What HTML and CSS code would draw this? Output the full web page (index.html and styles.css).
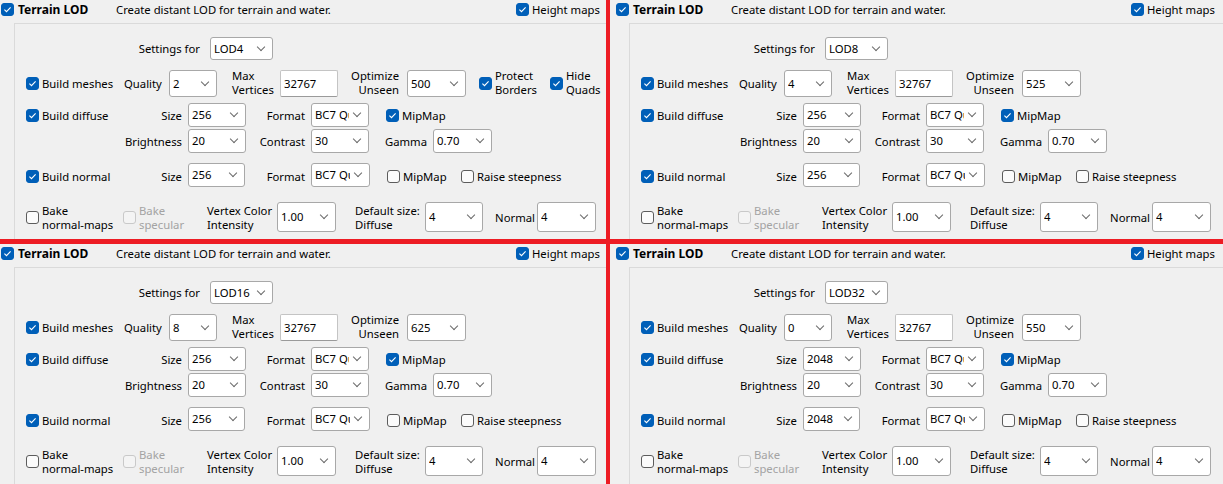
FILE: index.html
```html
<!DOCTYPE html>
<html>
<head>
<meta charset="utf-8">
<link rel="stylesheet" href="styles.css">
</head>
<body>
<main class="board">

<!-- top left -->
<section class="panel">
  <header class="head">
    <label class="chk on"><span class="box"><svg viewBox="0 0 11 11"><path d="M2.4 5.6 L4.5 7.7 L8.6 3.3"/></svg></span><b class="title">Terrain LOD</b></label>
    <span class="desc">Create distant LOD for terrain and water.</span>
    <label class="chk on"><span class="box"><svg viewBox="0 0 11 11"><path d="M2.4 5.6 L4.5 7.7 L8.6 3.3"/></svg></span>Height maps</label>
  </header>
  <div class="group">
    <div class="row r-set"><span class="lbl end pr10">Settings for</span><span class="combo"><span class="val">LOD4</span><i class="chev"></i></span></div>
    <div class="row r-mesh">
      <label class="chk on pl11"><span class="box"><svg viewBox="0 0 11 11"><path d="M2.4 5.6 L4.5 7.7 L8.6 3.3"/></svg></span>Build meshes</label>
      <span class="lbl">Quality</span>
      <span class="combo"><span class="val">2</span><i class="chev"></i></span>
      <span class="lbl two pl15">Max<br>Vertices</span>
      <span class="edit">32767</span>
      <span class="lbl two end pr8">Optimize<br>Unseen</span>
      <span class="combo"><span class="val">500</span><i class="chev"></i></span>
      <label class="chk on pl13"><span class="box"><svg viewBox="0 0 11 11"><path d="M2.4 5.6 L4.5 7.7 L8.6 3.3"/></svg></span><span class="two">Protect<br>Borders</span></label>
      <label class="chk on"><span class="box"><svg viewBox="0 0 11 11"><path d="M2.4 5.6 L4.5 7.7 L8.6 3.3"/></svg></span><span class="two">Hide<br>Quads</span></label>
    </div>
    <div class="row r-diff">
      <label class="chk on pl11"><span class="box"><svg viewBox="0 0 11 11"><path d="M2.4 5.6 L4.5 7.7 L8.6 3.3"/></svg></span>Build diffuse</label>
      <span class="lbl end pr6">Size</span>
      <span class="combo"><span class="val">256</span><i class="chev"></i></span>
      <span class="lbl end pr6">Format</span>
      <span class="combo"><span class="val">BC7 Quality</span><i class="chev"></i></span>
      <label class="chk on pl17"><span class="box"><svg viewBox="0 0 11 11"><path d="M2.4 5.6 L4.5 7.7 L8.6 3.3"/></svg></span>MipMap</label>
    </div>
    <div class="row r-bri">
      <span></span>
      <span class="lbl end pr6">Brightness</span>
      <span class="combo"><span class="val">20</span><i class="chev"></i></span>
      <span class="lbl end pr6">Contrast</span>
      <span class="combo"><span class="val">30</span><i class="chev"></i></span>
      <span class="lbl end pr6">Gamma</span>
      <span class="combo"><span class="val">0.70</span><i class="chev"></i></span>
    </div>
    <div class="row r-norm">
      <label class="chk on pl11"><span class="box"><svg viewBox="0 0 11 11"><path d="M2.4 5.6 L4.5 7.7 L8.6 3.3"/></svg></span>Build normal</label>
      <span class="lbl end pr6">Size</span>
      <span class="combo"><span class="val">256</span><i class="chev"></i></span>
      <span class="lbl end pr6">Format</span>
      <span class="combo"><span class="val">BC7 Quality</span><i class="chev"></i></span>
      <label class="chk pl17"><span class="box"></span>MipMap</label>
      <label class="chk"><span class="box"></span>Raise steepness</label>
    </div>
    <div class="row r-bake">
      <label class="chk pl11"><span class="box"></span><span class="two">Bake<br>normal-maps</span></label>
      <label class="chk off"><span class="box"></span><span class="two">Bake<br>specular</span></label>
      <span class="lbl two">Vertex Color<br>Intensity</span>
      <span class="combo"><span class="val">1.00</span><i class="chev"></i></span>
      <span class="lbl two pl19">Default size:<br>Diffuse</span>
      <span class="combo"><span class="val">4</span><i class="chev"></i></span>
      <span class="lbl end pr2">Normal</span>
      <span class="combo"><span class="val">4</span><i class="chev"></i></span>
    </div>
  </div>
</section>

<!-- top right -->
<section class="panel east">
  <header class="head">
    <label class="chk on"><span class="box"><svg viewBox="0 0 11 11"><path d="M2.4 5.6 L4.5 7.7 L8.6 3.3"/></svg></span><b class="title">Terrain LOD</b></label>
    <span class="desc">Create distant LOD for terrain and water.</span>
    <label class="chk on"><span class="box"><svg viewBox="0 0 11 11"><path d="M2.4 5.6 L4.5 7.7 L8.6 3.3"/></svg></span>Height maps</label>
  </header>
  <div class="group">
    <div class="row r-set"><span class="lbl end pr10">Settings for</span><span class="combo"><span class="val">LOD8</span><i class="chev"></i></span></div>
    <div class="row r-mesh">
      <label class="chk on pl11"><span class="box"><svg viewBox="0 0 11 11"><path d="M2.4 5.6 L4.5 7.7 L8.6 3.3"/></svg></span>Build meshes</label>
      <span class="lbl">Quality</span>
      <span class="combo"><span class="val">4</span><i class="chev"></i></span>
      <span class="lbl two pl15">Max<br>Vertices</span>
      <span class="edit">32767</span>
      <span class="lbl two end pr8">Optimize<br>Unseen</span>
      <span class="combo"><span class="val">525</span><i class="chev"></i></span>
    </div>
    <div class="row r-diff">
      <label class="chk on pl11"><span class="box"><svg viewBox="0 0 11 11"><path d="M2.4 5.6 L4.5 7.7 L8.6 3.3"/></svg></span>Build diffuse</label>
      <span class="lbl end pr6">Size</span>
      <span class="combo"><span class="val">256</span><i class="chev"></i></span>
      <span class="lbl end pr6">Format</span>
      <span class="combo"><span class="val">BC7 Quality</span><i class="chev"></i></span>
      <label class="chk on pl17"><span class="box"><svg viewBox="0 0 11 11"><path d="M2.4 5.6 L4.5 7.7 L8.6 3.3"/></svg></span>MipMap</label>
    </div>
    <div class="row r-bri">
      <span></span>
      <span class="lbl end pr6">Brightness</span>
      <span class="combo"><span class="val">20</span><i class="chev"></i></span>
      <span class="lbl end pr6">Contrast</span>
      <span class="combo"><span class="val">30</span><i class="chev"></i></span>
      <span class="lbl end pr6">Gamma</span>
      <span class="combo"><span class="val">0.70</span><i class="chev"></i></span>
    </div>
    <div class="row r-norm">
      <label class="chk on pl11"><span class="box"><svg viewBox="0 0 11 11"><path d="M2.4 5.6 L4.5 7.7 L8.6 3.3"/></svg></span>Build normal</label>
      <span class="lbl end pr6">Size</span>
      <span class="combo"><span class="val">256</span><i class="chev"></i></span>
      <span class="lbl end pr6">Format</span>
      <span class="combo"><span class="val">BC7 Quality</span><i class="chev"></i></span>
      <label class="chk pl17"><span class="box"></span>MipMap</label>
      <label class="chk"><span class="box"></span>Raise steepness</label>
    </div>
    <div class="row r-bake">
      <label class="chk pl11"><span class="box"></span><span class="two">Bake<br>normal-maps</span></label>
      <label class="chk off"><span class="box"></span><span class="two">Bake<br>specular</span></label>
      <span class="lbl two">Vertex Color<br>Intensity</span>
      <span class="combo"><span class="val">1.00</span><i class="chev"></i></span>
      <span class="lbl two pl19">Default size:<br>Diffuse</span>
      <span class="combo"><span class="val">4</span><i class="chev"></i></span>
      <span class="lbl end pr2">Normal</span>
      <span class="combo"><span class="val">4</span><i class="chev"></i></span>
    </div>
  </div>
</section>

<!-- bottom left -->
<section class="panel">
  <header class="head">
    <label class="chk on"><span class="box"><svg viewBox="0 0 11 11"><path d="M2.4 5.6 L4.5 7.7 L8.6 3.3"/></svg></span><b class="title">Terrain LOD</b></label>
    <span class="desc">Create distant LOD for terrain and water.</span>
    <label class="chk on"><span class="box"><svg viewBox="0 0 11 11"><path d="M2.4 5.6 L4.5 7.7 L8.6 3.3"/></svg></span>Height maps</label>
  </header>
  <div class="group">
    <div class="row r-set"><span class="lbl end pr10">Settings for</span><span class="combo"><span class="val">LOD16</span><i class="chev"></i></span></div>
    <div class="row r-mesh">
      <label class="chk on pl11"><span class="box"><svg viewBox="0 0 11 11"><path d="M2.4 5.6 L4.5 7.7 L8.6 3.3"/></svg></span>Build meshes</label>
      <span class="lbl">Quality</span>
      <span class="combo"><span class="val">8</span><i class="chev"></i></span>
      <span class="lbl two pl15">Max<br>Vertices</span>
      <span class="edit">32767</span>
      <span class="lbl two end pr8">Optimize<br>Unseen</span>
      <span class="combo"><span class="val">625</span><i class="chev"></i></span>
    </div>
    <div class="row r-diff">
      <label class="chk on pl11"><span class="box"><svg viewBox="0 0 11 11"><path d="M2.4 5.6 L4.5 7.7 L8.6 3.3"/></svg></span>Build diffuse</label>
      <span class="lbl end pr6">Size</span>
      <span class="combo"><span class="val">256</span><i class="chev"></i></span>
      <span class="lbl end pr6">Format</span>
      <span class="combo"><span class="val">BC7 Quality</span><i class="chev"></i></span>
      <label class="chk on pl17"><span class="box"><svg viewBox="0 0 11 11"><path d="M2.4 5.6 L4.5 7.7 L8.6 3.3"/></svg></span>MipMap</label>
    </div>
    <div class="row r-bri">
      <span></span>
      <span class="lbl end pr6">Brightness</span>
      <span class="combo"><span class="val">20</span><i class="chev"></i></span>
      <span class="lbl end pr6">Contrast</span>
      <span class="combo"><span class="val">30</span><i class="chev"></i></span>
      <span class="lbl end pr6">Gamma</span>
      <span class="combo"><span class="val">0.70</span><i class="chev"></i></span>
    </div>
    <div class="row r-norm">
      <label class="chk on pl11"><span class="box"><svg viewBox="0 0 11 11"><path d="M2.4 5.6 L4.5 7.7 L8.6 3.3"/></svg></span>Build normal</label>
      <span class="lbl end pr6">Size</span>
      <span class="combo"><span class="val">256</span><i class="chev"></i></span>
      <span class="lbl end pr6">Format</span>
      <span class="combo"><span class="val">BC7 Quality</span><i class="chev"></i></span>
      <label class="chk pl17"><span class="box"></span>MipMap</label>
      <label class="chk"><span class="box"></span>Raise steepness</label>
    </div>
    <div class="row r-bake">
      <label class="chk pl11"><span class="box"></span><span class="two">Bake<br>normal-maps</span></label>
      <label class="chk off"><span class="box"></span><span class="two">Bake<br>specular</span></label>
      <span class="lbl two">Vertex Color<br>Intensity</span>
      <span class="combo"><span class="val">1.00</span><i class="chev"></i></span>
      <span class="lbl two pl19">Default size:<br>Diffuse</span>
      <span class="combo"><span class="val">4</span><i class="chev"></i></span>
      <span class="lbl end pr2">Normal</span>
      <span class="combo"><span class="val">4</span><i class="chev"></i></span>
    </div>
  </div>
</section>

<!-- bottom right -->
<section class="panel east">
  <header class="head">
    <label class="chk on"><span class="box"><svg viewBox="0 0 11 11"><path d="M2.4 5.6 L4.5 7.7 L8.6 3.3"/></svg></span><b class="title">Terrain LOD</b></label>
    <span class="desc">Create distant LOD for terrain and water.</span>
    <label class="chk on"><span class="box"><svg viewBox="0 0 11 11"><path d="M2.4 5.6 L4.5 7.7 L8.6 3.3"/></svg></span>Height maps</label>
  </header>
  <div class="group">
    <div class="row r-set"><span class="lbl end pr10">Settings for</span><span class="combo"><span class="val">LOD32</span><i class="chev"></i></span></div>
    <div class="row r-mesh">
      <label class="chk on pl11"><span class="box"><svg viewBox="0 0 11 11"><path d="M2.4 5.6 L4.5 7.7 L8.6 3.3"/></svg></span>Build meshes</label>
      <span class="lbl">Quality</span>
      <span class="combo"><span class="val">0</span><i class="chev"></i></span>
      <span class="lbl two pl15">Max<br>Vertices</span>
      <span class="edit">32767</span>
      <span class="lbl two end pr8">Optimize<br>Unseen</span>
      <span class="combo"><span class="val">550</span><i class="chev"></i></span>
    </div>
    <div class="row r-diff">
      <label class="chk on pl11"><span class="box"><svg viewBox="0 0 11 11"><path d="M2.4 5.6 L4.5 7.7 L8.6 3.3"/></svg></span>Build diffuse</label>
      <span class="lbl end pr6">Size</span>
      <span class="combo"><span class="val">2048</span><i class="chev"></i></span>
      <span class="lbl end pr6">Format</span>
      <span class="combo"><span class="val">BC7 Quality</span><i class="chev"></i></span>
      <label class="chk on pl17"><span class="box"><svg viewBox="0 0 11 11"><path d="M2.4 5.6 L4.5 7.7 L8.6 3.3"/></svg></span>MipMap</label>
    </div>
    <div class="row r-bri">
      <span></span>
      <span class="lbl end pr6">Brightness</span>
      <span class="combo"><span class="val">20</span><i class="chev"></i></span>
      <span class="lbl end pr6">Contrast</span>
      <span class="combo"><span class="val">30</span><i class="chev"></i></span>
      <span class="lbl end pr6">Gamma</span>
      <span class="combo"><span class="val">0.70</span><i class="chev"></i></span>
    </div>
    <div class="row r-norm">
      <label class="chk on pl11"><span class="box"><svg viewBox="0 0 11 11"><path d="M2.4 5.6 L4.5 7.7 L8.6 3.3"/></svg></span>Build normal</label>
      <span class="lbl end pr6">Size</span>
      <span class="combo"><span class="val">2048</span><i class="chev"></i></span>
      <span class="lbl end pr6">Format</span>
      <span class="combo"><span class="val">BC7 Quality</span><i class="chev"></i></span>
      <label class="chk pl17"><span class="box"></span>MipMap</label>
      <label class="chk"><span class="box"></span>Raise steepness</label>
    </div>
    <div class="row r-bake">
      <label class="chk pl11"><span class="box"></span><span class="two">Bake<br>normal-maps</span></label>
      <label class="chk off"><span class="box"></span><span class="two">Bake<br>specular</span></label>
      <span class="lbl two">Vertex Color<br>Intensity</span>
      <span class="combo"><span class="val">1.00</span><i class="chev"></i></span>
      <span class="lbl two pl19">Default size:<br>Diffuse</span>
      <span class="combo"><span class="val">4</span><i class="chev"></i></span>
      <span class="lbl end pr2">Normal</span>
      <span class="combo"><span class="val">4</span><i class="chev"></i></span>
    </div>
  </div>
</section>

</main>
</body>
</html>
```

FILE: styles.css
```css
* { box-sizing: border-box; }
html, body { margin: 0; padding: 0; }
body {
  width: 1223px;
  height: 484px;
  overflow: hidden;
  background: #f0f0f0;
  font-family: "Noto Sans", "Segoe UI", sans-serif;
  font-size: 11.3px;
  line-height: 15px;
  color: #000;
}

.board {
  display: grid;
  grid-template-columns: 606px 613px;
  grid-template-rows: 239px 240px;
  column-gap: 4px;
  row-gap: 5px;
  height: 484px;
  background: #ed1c24;
}

.panel {
  background: #f0f0f0;
  overflow: hidden;
  display: flex;
  flex-direction: column;
}
.panel.east { padding-left: 5px; }

/* header line */
.head {
  display: grid;
  grid-template-columns: 115px 400px auto;
  align-items: center;
  height: 19px;
  margin-bottom: 4px;
  padding-left: 1px;
  white-space: nowrap;
}
.title { font-weight: 700; font-size: 12px; margin-left: 1px; }

/* group box */
.group {
  flex: 1;
  margin-left: 14px;
  border-top: 1px solid #dadada;
  border-left: 1px solid #dadada;
}

.row {
  display: grid;
  align-items: center;
  white-space: nowrap;
}
.r-set  { height: 23px; margin-top: 13px; grid-template-columns: 195px 63px; }
.r-mesh { height: 23px; margin-top: 10px; grid-template-columns: 109px 45px 48px 63px 58px 69px 59px 84px auto; }
.r-diff { height: 24px; margin-top: 10px; grid-template-columns: 109px 64px 58px 65px 58px auto; }
.r-bri  { height: 24px; margin-top: 2px;  grid-template-columns: 109px 64px 58px 65px 58px 64px 59px; }
.r-norm { height: 24px; margin-top: 10px; grid-template-columns: 109px 64px 57px 66px 59px 91px auto; }
.r-bake { height: 25px; margin-top: 15px; grid-template-columns: 108px 84px 70px 59px 89px 58px 54px 59px; }

.r-set .lbl, .r-mesh .lbl, .r-mesh .chk { margin-top: -1px; }
.r-norm .lbl, .r-norm .chk { margin-top: 3px; }

.lbl { display: block; }
.end { text-align: right; }
.two { line-height: 14px; }
.r-bake .two { margin-top: 2px; }

.pl11 { padding-left: 11px; }
.pl13 { padding-left: 13px; }
.pl15 { padding-left: 15px; }
.pl17 { padding-left: 17px; }
.pl19 { padding-left: 19px; }
.pr2 { padding-right: 2px; }
.pr6 { padding-right: 6px; }
.pr8 { padding-right: 8px; }
.pr10 { padding-right: 10px; }

/* checkboxes */
.chk {
  display: flex;
  align-items: center;
  gap: 3px;
}
.box {
  flex: none;
  width: 13px;
  height: 13px;
  border: 1px solid #5c5c5c;
  border-radius: 3px;
  background: #fbfbfb;
  display: flex;
}
.box svg { width: 11px; height: 11px; }
.box path { fill: none; stroke: #fff; stroke-width: 1.1; }
.on .box { background: #005fb8; border-color: #005fb8; }
.off { color: #a3a3a3; }
.off .box { border-color: #c9c9c9; background: #f4f4f4; }

/* combos / edits */
.combo {
  display: flex;
  align-items: center;
  height: 100%;
  background: #fff;
  border: 1px solid #a8a8a8;
  border-radius: 3px;
  padding-left: 3px;
}
.val { flex: 1; overflow: hidden; white-space: nowrap; line-height: 18px; }
.chev {
  flex: none;
  width: 6px;
  height: 6px;
  border-right: 1px solid #6a6a6a;
  border-bottom: 1px solid #6a6a6a;
  transform: rotate(45deg);
  margin: -4px 8px 0 5px;
}
.edit {
  display: flex;
  align-items: center;
  height: 100%;
  background: #fff;
  border: 1px solid #c4c4c4;
  border-bottom-color: #9a9a9a;
  border-radius: 2px;
  padding-left: 3px;
}
```
